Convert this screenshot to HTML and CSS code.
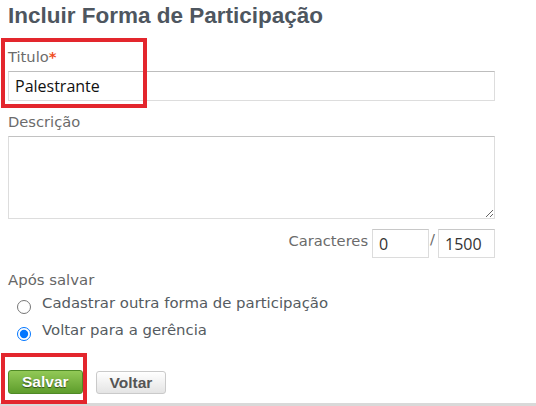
FILE: index.html
```html
<!DOCTYPE html>
<html lang="pt-BR">
<head>
<meta charset="utf-8">
<title>Incluir Forma de Participação</title>
<link rel="stylesheet" href="styles.css">
</head>
<body>
<div class="page">
  <h1 class="title">Incluir Forma de Participação</h1>

  <label class="field-label first" for="titulo">Titulo<span class="req">*</span></label>
  <input class="text-input" id="titulo" type="text" value="Palestrante">

  <label class="field-label" for="desc">Descrição</label>
  <textarea class="text-area" id="desc"></textarea>

  <div class="chars-row">
    <span class="chars-label">Caracteres</span>
    <input class="chars-input" type="text" value="0">
    <span class="chars-sep">/</span>
    <input class="chars-input" type="text" value="1500">
  </div>

  <div class="after-label">Após salvar</div>
  <label class="radio-row"><input class="radio" type="radio" name="apos"><span>Cadastrar outra forma de participação</span></label>
  <label class="radio-row"><input class="radio" type="radio" name="apos" checked><span>Voltar para a gerência</span></label>

  <div class="actions">
    <button class="btn btn-primary" type="button">Salvar</button>
    <button class="btn btn-default" type="button">Voltar</button>
  </div>
</div>
<div class="footer-bar"></div>

<div class="highlight highlight-title"></div>
<div class="highlight highlight-save"></div>
</body>
</html>
```

FILE: styles.css
```css
html, body {
  margin: 0;
  padding: 0;
  background: #ffffff;
  overflow: hidden;
}

body {
  position: relative;
  width: 536px;
  height: 406px;
  font-family: "DejaVu Sans", Verdana, sans-serif;
}

.page {
  padding: 0 41px 0 8px;
}

.title {
  margin: 2px 0 0 0;
  font-family: "Liberation Sans", Arial, sans-serif;
  font-weight: 700;
  font-size: 22.5px;
  line-height: 28px;
  color: #4e565f;
}

.field-label {
  display: block;
  margin-top: 12px;
  font-size: 14.7px;
  line-height: 18px;
  color: #6b6b6b;
}

.field-label.first {
  margin-top: 18px;
}

.req {
  color: #f04e23;
  font-weight: 700;
}

.text-input {
  display: block;
  box-sizing: border-box;
  width: 100%;
  height: 30px;
  margin: 5px 0 0 0;
  padding: 0 6px;
  border: 1px solid #dddddd;
  border-top-color: #bdbdbd;
  border-radius: 0;
  font-family: "Open Sans", "Noto Sans", sans-serif;
  font-size: 16px;
  color: #111111;
  outline: none;
}

.text-area {
  display: block;
  box-sizing: border-box;
  width: 100%;
  height: 83px;
  margin: 5px 0 0 0;
  padding: 4px 6px;
  border: 1px solid #dddddd;
  border-top-color: #c2c2c2;
  border-radius: 0;
  font-family: "Open Sans", sans-serif;
  font-size: 15px;
  outline: none;
}

.chars-row {
  display: flex;
  justify-content: flex-end;
  align-items: flex-start;
  margin-top: 10px;
}

.chars-label {
  font-size: 14.7px;
  line-height: 18px;
  padding-top: 3px;
  margin-right: 4px;
  color: #6b6b6b;
}

.chars-input {
  box-sizing: border-box;
  width: 57px;
  height: 29px;
  margin: 0;
  padding: 0 6px;
  border: 1px solid #dcdcdc;
  border-top-color: #c8c8c8;
  border-radius: 0;
  font-family: "Open Sans", sans-serif;
  font-size: 16px;
  color: #333333;
  outline: none;
}

.chars-sep {
  font-size: 14.7px;
  line-height: 18px;
  padding-top: 1px;
  margin: 0 3px 0 1px;
  color: #6b6b6b;
}

.after-label {
  margin-top: 13px;
  font-size: 14.9px;
  line-height: 18px;
  color: #666666;
}

.radio-row {
  display: flex;
  align-items: flex-start;
  margin-top: 1px;
  height: 27px;
  font-size: 14.9px;
  line-height: 27px;
  color: #555b61;
}

.radio-row + .radio-row {
  margin-top: 0;
}

.radio {
  width: 14px;
  height: 14px;
  margin: 10px 11px 0 9px;
  flex: none;
}

.actions {
  display: flex;
  align-items: flex-start;
  gap: 13px;
  margin-top: 26px;
}

.btn {
  box-sizing: border-box;
  margin: 0;
  padding: 0 13px;
  border-radius: 3px;
  font-family: "Liberation Sans", Arial, sans-serif;
  font-weight: 700;
  font-size: 15.5px;
  cursor: pointer;
}

.btn-primary {
  height: 24px;
  border: 1px solid #4f8a26;
  background: linear-gradient(#92c957, #5e9d2c);
  color: #ffffff;
  text-shadow: 0 1px 1px rgba(0, 0, 0, 0.55);
}

.btn-default {
  height: 23px;
  margin-top: 1px;
  border: 1px solid #cacaca;
  background: linear-gradient(#ffffff, #e4e4e4);
  color: #555555;
}

.footer-bar {
  margin-top: 9px;
  height: 10px;
  background: #d9d9d9;
}

.highlight {
  position: absolute;
  box-sizing: border-box;
  border: 4px solid #e3262d;
  pointer-events: none;
}

.highlight-title {
  left: 1px;
  top: 38px;
  width: 146px;
  height: 70px;
}

.highlight-save {
  left: 1px;
  top: 353px;
  width: 86px;
  height: 51px;
}
```
